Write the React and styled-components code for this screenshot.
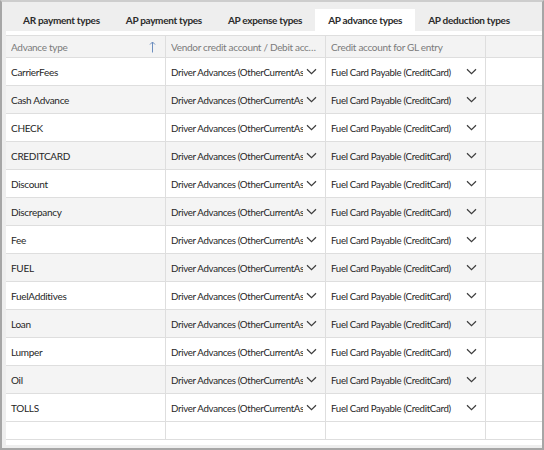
import React from "react";
import styled, { createGlobalStyle } from "styled-components";

const Global = createGlobalStyle`
  html, body { margin: 0; padding: 0; background: #fff; }
  body { font-family: Lato, "Open Sans", sans-serif; }
  * { box-sizing: border-box; }
`;

const Frame = styled.div`
  width: 544px;
  height: 450px;
  border: 2px solid #a6a6a6;
  border-top-color: #cdcdcd;
  background: #eeeeee;
  display: flex;
  flex-direction: column;
  overflow: hidden;
`;

const TabBar = styled.div`
  height: 29px;
  display: flex;
  align-items: flex-end;
  padding-left: 8px;
  flex-shrink: 0;
`;

const Tab = styled.div`
  height: 22px;
  padding: 0 13px;
  display: flex;
  align-items: center;
  font-size: 10px;
  letter-spacing: -0.3px;
  font-weight: 700;
  color: #2b2b2b;
  white-space: nowrap;
  background: ${(p) => (p.$active ? "#ffffff" : "transparent")};
`;

const Grid = styled.div`
  flex: 1;
  margin: 0 0 3px 4px;
  background: #fff;
  padding-top: 4px;
  display: flex;
  flex-direction: column;
  min-height: 0;
`;

const Row = styled.div`
  display: grid;
  grid-template-columns: 160px 160px 160px 1fr;
  height: ${(p) => (p.$header ? "23px" : "28px")};
  flex-shrink: 0;
  border-bottom: 1px solid #dedede;
  border-top: ${(p) => (p.$header ? "1px solid #dedede" : "none")};
  background: ${(p) => (p.$header ? "#f3f3f3" : p.$alt ? "#f4f4f4" : "#ffffff")};
`;

const Cell = styled.div`
  display: flex;
  align-items: center;
  padding: 0 ${(p) => (p.$header ? "4px" : "8px")} 0 5px;
  border-right: 1px solid #dedede;
  font-size: 10px;
  letter-spacing: -0.3px;
  color: ${(p) => (p.$header ? "#7b7b7b" : "#262626")};
  overflow: hidden;
  white-space: nowrap;
  min-width: 0;
  &:last-child { border-right: none; }
`;

const HeadText = styled.span`
  flex: 1;
  min-width: 0;
  overflow: hidden;
  text-overflow: ellipsis;
  white-space: nowrap;
`;

const SelectText = styled.span`
  flex: 1;
  min-width: 0;
  overflow: hidden;
  white-space: nowrap;
  font-size: 9.7px;
  letter-spacing: -0.32px;
`;

const Filler = styled.div`
  display: grid;
  grid-template-columns: 160px 160px 160px 1fr;
  height: 18px;
  flex-shrink: 0;
  border-bottom: 1px solid #dedede;
`;

const FillCell = styled.div`
  border-right: 1px solid #dedede;
  &:last-child { border-right: none; }
`;

const Chevron = () => (
  <svg width="11" height="7" viewBox="0 0 11 7" style={{ flexShrink: 0, marginLeft: 3 }}>
    <path d="M1 1.2 L5.5 5.6 L10 1.2" fill="none" stroke="#3c3c3c" strokeWidth="1.2" />
  </svg>
);

const SortArrow = () => (
  <svg width="7" height="12" viewBox="0 0 7 12" style={{ flexShrink: 0, marginRight: 5 }}>
    <path d="M3.5 11.5 V1 M1 3.5 L3.5 1 L6 3.5" fill="none" stroke="#6c8ebf" strokeWidth="1" />
  </svg>
);

const tabs = ["AR payment types", "AP payment types", "AP expense types", "AP advance types", "AP deduction types"];
const types = ["CarrierFees", "Cash Advance", "CHECK", "CREDITCARD", "Discount", "Discrepancy", "Fee", "FUEL", "FuelAdditives", "Loan", "Lumper", "Oil", "TOLLS"];

export default function App() {
  return (
    <>
      <Global />
      <Frame>
        <TabBar>
          {tabs.map((t) => (
            <Tab key={t} $active={t === "AP advance types"}>{t}</Tab>
          ))}
        </TabBar>
        <Grid>
          <Row $header>
            <Cell $header>
              <HeadText>Advance type</HeadText>
              <SortArrow />
            </Cell>
            <Cell $header>
              <HeadText>Vendor credit account / Debit account</HeadText>
            </Cell>
            <Cell $header>
              <HeadText>Credit account for GL entry</HeadText>
            </Cell>
            <Cell $header />
          </Row>
          {types.map((t, i) => (
            <Row key={t} $alt={i % 2 === 1}>
              <Cell>{t}</Cell>
              <Cell>
                <SelectText>Driver Advances (OtherCurrentAs</SelectText>
                <Chevron />
              </Cell>
              <Cell>
                <SelectText>Fuel Card Payable (CreditCard)</SelectText>
                <Chevron />
              </Cell>
              <Cell />
            </Row>
          ))}
          <Filler>
            <FillCell />
            <FillCell />
            <FillCell />
            <FillCell />
          </Filler>
        </Grid>
      </Frame>
    </>
  );
}
